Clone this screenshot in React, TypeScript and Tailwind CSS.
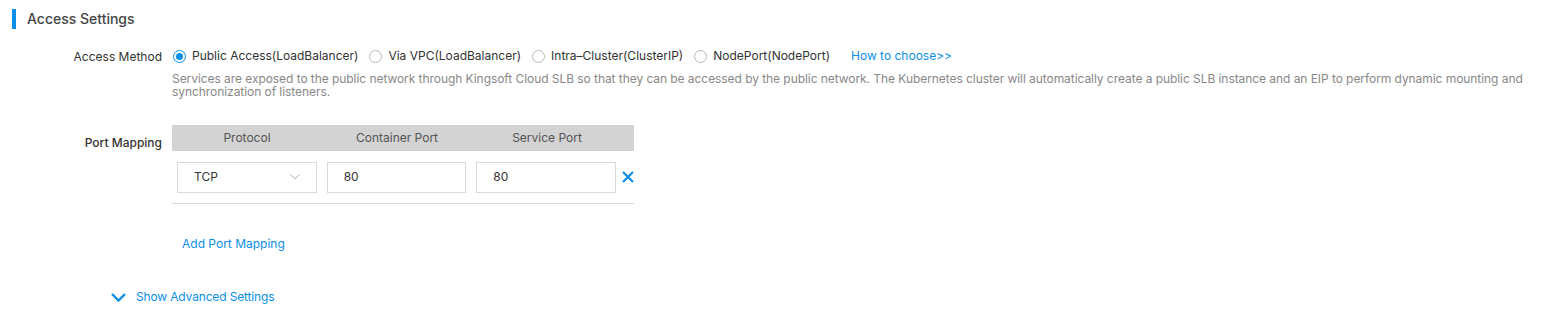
import { useState } from "react";

const methods = [
  "Public Access(LoadBalancer)",
  "Via VPC(LoadBalancer)",
  "Intra–Cluster(ClusterIP)",
  "NodePort(NodePort)",
];

function Radio({ checked, label }: { checked: boolean; label: string }) {
  return (
    <label className="flex items-center gap-[6px] cursor-pointer">
      <span
        className={
          checked
            ? "flex h-[13px] w-[13px] items-center justify-center rounded-full border border-[#0b8fe8] bg-white"
            : "h-[13px] w-[13px] rounded-full border border-[#b8b8b8] bg-white"
        }
      >
        {checked && <span className="h-[7px] w-[7px] rounded-full bg-[#0b8fe8]" />}
      </span>
      <span className="text-[12px] text-[#333]">{label}</span>
    </label>
  );
}

export default function App() {
  const [method] = useState(0);

  return (
    <div className="h-[324px] w-[1551px] bg-white font-['Inter','Liberation_Sans',Arial,sans-serif] text-[12px] text-[#333]">
      {/* 标题 */}
      <div className="flex items-center pt-[8px] pl-[12px]">
        <span className="h-[20px] w-[4px] bg-[#0b8fe8]" />
        <h2 className="ml-[11px] text-[14px] font-medium text-[#444]">Access Settings</h2>
      </div>

      {/* 访问方式 */}
      <div className="mt-[18px] flex">
        <div className="w-[162px] shrink-0 pt-[1px] text-right text-[#333]">Access Method</div>
        <div className="ml-[11px] flex-1 pr-[8px]">
          <div className="flex items-center gap-[11px]">
            {methods.map((m, i) => (
              <Radio key={m} checked={i === method} label={m} />
            ))}
            <a className="ml-[10px] text-[#0b8fe8]">How to choose&gt;&gt;</a>
          </div>
          <p className="mt-[7px] -ml-[1px] leading-[13px] tracking-[-0.06px] text-[#888]">
            Services are exposed to the public network through Kingsoft Cloud SLB so that they can be accessed by the public network. The Kubernetes cluster will automatically create a public SLB instance and an EIP to perform dynamic mounting and synchronization of listeners.
          </p>
        </div>
      </div>

      {/* 端口映射 */}
      <div className="mt-[27px] flex">
        <div className="w-[162px] shrink-0 pt-[9px] text-right font-medium text-[#333]">Port Mapping</div>
        <div className="ml-[10px]">
          <div className="w-[462px]">
            <div className="flex h-[26px] items-center bg-[#d3d3d3] text-[#555]">
              <div className="w-[150px] text-center">Protocol</div>
              <div className="w-[150px] text-center">Container Port</div>
              <div className="w-[150px] text-center">Service Port</div>
            </div>
            <div className="flex h-[53px] items-center border-b border-[#d6d6d6] pl-[5px]">
              <div className="flex h-[31px] w-[140px] items-center justify-between border border-[#d9d9d9] px-[16px]">
                <span>TCP</span>
                <svg width="10" height="6" viewBox="0 0 10 6" fill="none" stroke="#b5b5b5" strokeWidth="1">
                  <path d="M0.5 0.5 5 5 9.5 0.5" />
                </svg>
              </div>
              <div className="ml-[10px] flex h-[31px] w-[140px] items-center border border-[#d9d9d9] px-[16px]">80</div>
              <div className="ml-[10px] flex h-[31px] w-[140px] items-center border border-[#d9d9d9] px-[16px]">80</div>
              <svg className="ml-[6px]" width="12" height="12" viewBox="0 0 12 12" fill="none" stroke="#0b8fe8" strokeWidth="2.2">
                <path d="M1 1 11 11M11 1 1 11" />
              </svg>
            </div>
          </div>
          <a className="mt-[31px] ml-[10px] block text-[#0b8fe8]">Add Port Mapping</a>
        </div>
      </div>

      {/* 高级设置 */}
      <div className="mt-[35px] ml-[111px] flex items-center gap-[10px] text-[#0b8fe8]">
        <svg width="15" height="9" viewBox="0 0 15 9" fill="none" stroke="#0b8fe8" strokeWidth="2.4">
          <path d="M1 1 7.5 7.5 14 1" />
        </svg>
        <span className="tracking-[-0.15px]">Show Advanced Settings</span>
      </div>
    </div>
  );
}
